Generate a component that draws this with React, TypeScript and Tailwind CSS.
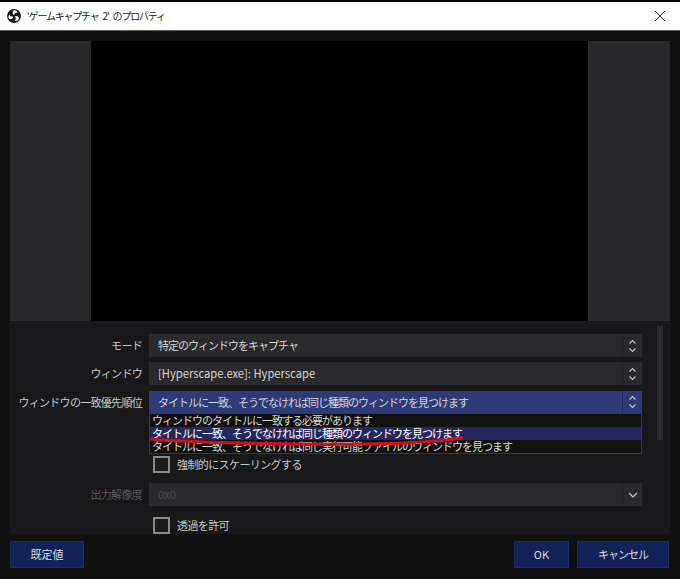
import React from "react";

const font = { fontFamily: '"Noto Sans CJK JP", "Liberation Sans", sans-serif' };

function Chevrons({ color = "#c8c8c8" }: { color?: string }) {
  return (
    <svg width="9" height="14" viewBox="0 0 9 14" fill="none" stroke={color} strokeWidth="1.1">
      <path d="M1.5 4.5 L4.5 1.5 L7.5 4.5" />
      <path d="M1.5 9.5 L4.5 12.5 L7.5 9.5" />
    </svg>
  );
}

function Combo({ text, active, disabled, single, latin, h = "h-[23px]" }: { text: string; active?: boolean; disabled?: boolean; single?: boolean; latin?: boolean; h?: string }) {
  return (
    <div className={`flex w-[493px] items-center ${h} ${active ? "bg-[#2e3b78]" : "bg-[#2a2a2c]"}`}>
      <span className={`flex-1 pl-[9px] leading-none whitespace-nowrap ${latin ? "text-[11.2px]" : "text-[11px] tracking-[-1px]"} ${disabled ? "text-[#4a4a4c]" : "text-[#d4d4d4]"}`}>{text}</span>
      <span className={`flex h-full w-[20px] items-center justify-center border-l ${active ? "border-[#1f2a5c]" : "border-[#222224]"}`}>
        {single ? (
          <svg width="10" height="6" viewBox="0 0 10 6" fill="none" stroke="#c8c8c8" strokeWidth="1.2">
            <path d="M1 1 L5 5 L9 1" />
          </svg>
        ) : (
          <Chevrons />
        )}
      </span>
    </div>
  );
}

function Row({ label, children, dim }: { label: string; children: React.ReactNode; dim?: boolean }) {
  return (
    <div className="flex items-center">
      <span className={`w-[133px] pr-[1px] text-right text-[11px] leading-none tracking-[-0.7px] whitespace-nowrap ${dim ? "text-[#5a5a5c]" : "text-[#c8c8c8]"}`}>{label}</span>
      <span className="w-[6px]" />
      {children}
    </div>
  );
}

function Check({ label }: { label: string }) {
  return (
    <div className="flex items-center pl-[143px]">
      <span className="h-[17px] w-[17px] shrink-0 border-2 border-[#8a8a8a] bg-[#1b1b1c]" />
      <span className="pl-[7px] text-[11px] leading-none tracking-[-0.6px] text-[#c8c8c8]">{label}</span>
    </div>
  );
}

function Btn({ text, w, track }: { text: string; w: string; track?: string }) {
  return (
    <div className={`flex h-[27px] ${w} items-center justify-center border border-[#1e2b68] bg-[#14225a] text-[11px] leading-none ${track ?? ""} text-[#dcdcdc]`}>
      {text}
    </div>
  );
}

const blade = "M7 6 C5.3 5.2 5 2.9 6.6 1.5 C8.6 0.9 10.6 2.2 10.4 4.3 C9.6 3.4 7.9 3.7 7 6 Z";

export default function App() {
  return (
    <div className="flex h-[579px] w-[680px] flex-col overflow-hidden bg-[#101011]" style={font}>
      <div className="h-[2px] bg-black" />
      <div className="flex h-[29px] items-center border-b border-[#555] bg-white pl-[7px] pr-[14px]">
        <svg width="14" height="14" viewBox="0 0 14 14">
          <circle cx="7" cy="7" r="6.9" fill="#161616" />
          <path d={blade} fill="#fff" />
          <path d={blade} fill="#fff" transform="rotate(120 7 7)" />
          <path d={blade} fill="#fff" transform="rotate(240 7 7)" />
        </svg>
        <span className="flex-1 pl-[6px] text-[10px] leading-none tracking-[-1.2px] [word-spacing:3px] text-[#222]">'ゲームキャプチャ 2' のプロパティ</span>
        <svg width="12" height="12" viewBox="0 0 12 12" stroke="#222" strokeWidth="1" fill="none">
          <path d="M1 1 L11 11 M11 1 L1 11" />
        </svg>
      </div>
      <div className="mx-[10px] mt-[10px] flex h-[280px] bg-black">
        <div className="w-[81px] bg-[#29292b]" />
        <div className="flex-1" />
        <div className="w-[82px] bg-[#29292b]" />
      </div>
      <div className="relative mx-[10px] h-[213px] overflow-hidden bg-[#18181a]">
        <div className="absolute left-[647px] top-[5px] h-[114px] w-[6px] bg-[#2c2c2e]" />
        <div className="flex flex-col pt-[13px]">
          <Row label="モード"><Combo text="特定のウィンドウをキャプチャ" /></Row>
          <div className="h-[5px]" />
          <Row label="ウィンドウ"><Combo text="[Hyperscape.exe]: Hyperscape" latin /></Row>
          <div className="h-[6px]" />
          <div className="relative">
            <Row label="ウィンドウの一致優先順位"><Combo text="タイトルに一致、そうでなければ同じ種類のウィンドウを見つけます" active h="h-[22px]" /></Row>
            <div className="absolute left-[139px] top-[22px] z-10 flex h-[41px] w-[493px] flex-col border border-[#3a3a3a] bg-[#111112] text-[11px] leading-[13px] tracking-[-1px] text-[#d8d8d8]">
              <div className="h-[13px] pl-[2px] whitespace-nowrap">ウィンドウのタイトルに一致する必要があります</div>
              <div className="h-[13px] bg-[#27275f] pl-[2px] whitespace-nowrap text-white">タイトルに一致、そうでなければ同じ種類のウィンドウを見つけます</div>
              <div className="h-[13px] pl-[2px] whitespace-nowrap">タイトルに一致、そうでなければ同じ実行可能ファイルのウィンドウを見つます</div>
            </div>
            <svg className="absolute left-[139px] top-[45px] z-20" width="320" height="14" viewBox="0 0 320 14" fill="none">
              <path d="M2 3 C 40 7, 90 7, 150 8 C 220 9, 280 7, 313 2" stroke="#d0101c" strokeWidth="3" strokeLinecap="round" />
            </svg>
          </div>
          <div className="h-[43px]" />
          <Check label="強制的にスケーリングする" />
          <div className="h-[10px]" />
          <Row label="出力解像度" dim><Combo text="0x0" disabled single latin /></Row>
          <div className="h-[11px]" />
          <Check label="透過を許可" />
        </div>
      </div>
      <div className="flex gap-[8px] pl-[10px] pr-[11px] pt-[7px]">
        <Btn text="既定値" w="w-[74px]" />
        <div className="flex-1" />
        <Btn text="OK" w="w-[55px]" />
        <Btn text="キャンセル" w="w-[92px]" track="tracking-[-1px]" />
      </div>
    </div>
  );
}
